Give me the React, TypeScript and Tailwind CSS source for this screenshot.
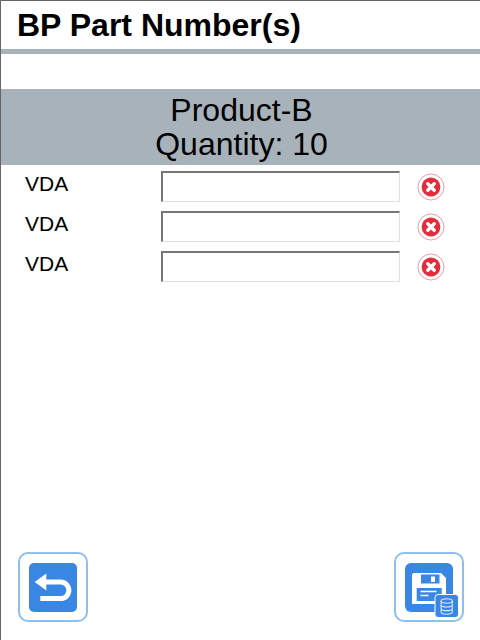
import { useState } from "react";

const rows = ["VDA", "VDA", "VDA"];

function RemoveIcon() {
  return (
    <svg width="28" height="28" viewBox="0 0 28 28">
      <circle cx="14" cy="14" r="13" fill="white" stroke="#f29aa4" strokeWidth="1" />
      <circle cx="14" cy="14" r="9.4" fill="#e62c3c" />
      <path d="M10.8 10.8l6.4 6.4M17.2 10.8l-6.4 6.4" stroke="white" strokeWidth="3.4" strokeLinecap="round" />
    </svg>
  );
}

function BackIcon() {
  return (
    <svg width="48" height="49" viewBox="0 0 48 49">
      <rect width="48" height="49" rx="5" fill="#3a86e4" />
      <path d="M17 19H31.6a8.3 8.3 0 0 1 0 16.6H11.3" fill="none" stroke="white" strokeWidth="5" />
      <path d="M5.7 19l11.6-8.4v16.8z" fill="white" />
    </svg>
  );
}

function SaveIcon() {
  return (
    <svg width="48" height="49" viewBox="0 0 48 49" className="overflow-visible">
      <rect width="48" height="49" rx="6" fill="#3a86e4" />
      <path d="M9 10h27l5 5v26H7V12a2 2 0 0 1 2-2z" fill="white" />
      <rect x="16" y="11.5" width="18.5" height="9" fill="#3a86e4" />
      <rect x="26" y="13.5" width="4" height="5.5" fill="white" />
      <rect x="11.7" y="25" width="25" height="13" fill="#3a86e4" />
      <path d="M15.5 28.5h16M15.5 32.5h8" stroke="white" strokeWidth="1.3" />
      <rect x="30" y="31.5" width="23.5" height="23" rx="3" fill="#3a86e4" stroke="white" strokeWidth="1" />
      <ellipse cx="41.7" cy="38" rx="5.6" ry="2.2" fill="none" stroke="#dbe9fa" strokeWidth="1.1" />
      <path d="M36.1 38v11c0 3 11.2 3 11.2 0V38M36.1 41.8c0 3 11.2 3 11.2 0M36.1 45.4c0 3 11.2 3 11.2 0" fill="none" stroke="#dbe9fa" strokeWidth="1.1" />
    </svg>
  );
}

export default function App() {
  const [values, setValues] = useState(["", "", ""]);

  return (
    <div className="flex h-[640px] w-[480px] flex-col border-t border-l border-[#666] bg-white font-['Liberation_Sans',Arial,sans-serif] text-black">
      <h1 className="box-content flex h-[48px] items-center border-b-[5px] border-[#a8b2ba] pl-4 text-[32px] leading-none font-bold">
        BP Part Number(s)
      </h1>

      <div className="mt-[35px] bg-[#a8b2ba] py-[4px] pl-[2px] text-center text-[32px] leading-[34px]">
        <div>Product-B</div>
        <div>Quantity: 10</div>
      </div>

      <div className="flex flex-1 flex-col gap-[10px] pt-[6px]">
        {rows.map((label, i) => (
          <div key={i} className="flex h-[30px] items-start">
            <span className="w-[160px] pl-6 text-[21px] leading-[26px]">{label}</span>
            <input
              value={values[i]}
              onChange={(e) => setValues(values.map((v, j) => (j === i ? e.target.value : v)))}
              className="h-[31px] w-[239px] border border-t-2 border-l-2 border-[#e0e0e0] border-t-[#767676] border-l-[#767676] bg-white"
            />
            <button className="mt-[2px] ml-[17px]">
              <RemoveIcon />
            </button>
          </div>
        ))}
      </div>

      <div className="flex items-center justify-between pr-[16px] pb-[18px] pl-[17px]">
        <button className="flex h-[70px] w-[70px] items-center justify-center rounded-[10px] border-2 border-[#8cc0f0]">
          <BackIcon />
        </button>
        <button className="flex h-[70px] w-[70px] items-center justify-center rounded-[10px] border-2 border-[#8cc0f0]">
          <SaveIcon />
        </button>
      </div>
    </div>
  );
}
